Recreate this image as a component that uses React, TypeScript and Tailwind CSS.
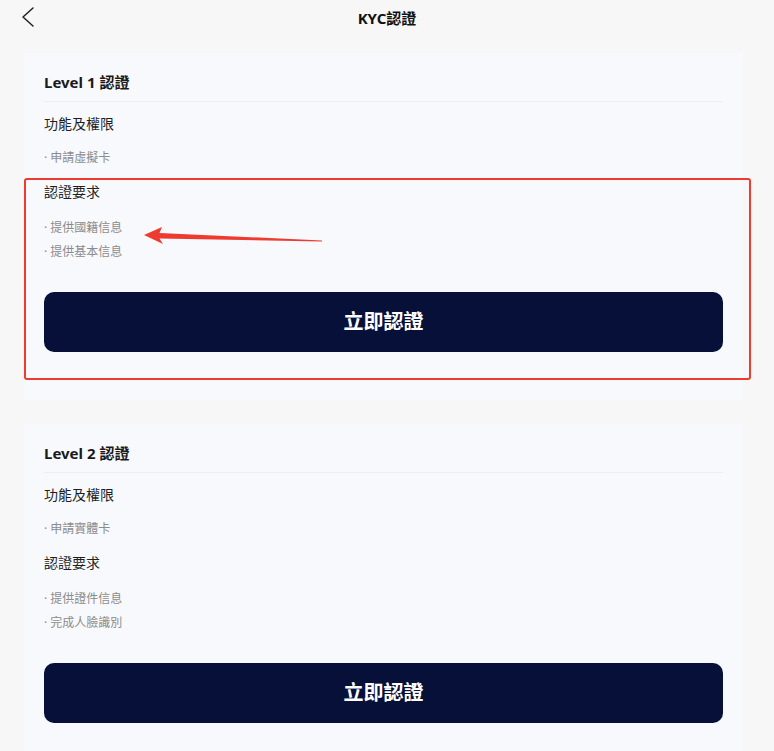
import React from "react";

const font = { fontFamily: '"Noto Sans", "Noto Sans CJK TC", sans-serif' };

function Card({ level, perm, reqs }: { level: string; perm: string; reqs: string[] }) {
  return (
    <div className="ml-6 w-[719px] bg-[#f8f9fc] px-5 pt-[17px] pb-12">
      <div className="text-[15px] leading-6 font-bold text-[#1a1a1a]">{level}</div>
      <div className="mt-[7px] h-px bg-[#eceef2]" />
      <div className="mt-3 text-[14px] leading-5 text-[#1f1f1f]">功能及權限</div>
      <div className="mt-4 text-[12px] leading-4 text-[#8c8c8c]">· {perm}</div>
      <div className="mt-4 text-[14px] leading-5 text-[#1f1f1f]">認證要求</div>
      <div className="mt-[18px] flex flex-col gap-2">
        {reqs.map((r) => (
          <div key={r} className="text-[12px] leading-4 text-[#8c8c8c]">· {r}</div>
        ))}
      </div>
      <button className="mt-8 flex h-[60px] w-full items-center justify-center rounded-[10px] bg-[#061038] text-[20px] font-bold text-white">
        立即認證
      </button>
    </div>
  );
}

export default function App() {
  return (
    <div className="relative min-h-[751px] w-[774px] overflow-hidden bg-[#f7f7f8]" style={font}>
      <div className="relative flex h-9 items-center justify-center">
        <svg className="absolute left-[20px] top-[6px]" width="16" height="22" viewBox="0 0 16 22">
          <path d="M13 2 L3 11 L13 20" fill="none" stroke="#222" strokeWidth="1.5" strokeLinecap="round" strokeLinejoin="round" />
        </svg>
        <div className="text-[15px] font-bold text-[#111]">KYC認證</div>
      </div>
      <div className="mt-[17px] flex flex-col gap-6">
        <Card level="Level 1 認證" perm="申請虛擬卡" reqs={["提供國籍信息", "提供基本信息"]} />
        <Card level="Level 2 認證" perm="申請實體卡" reqs={["提供證件信息", "完成人臉識別"]} />
      </div>
      <div className="pointer-events-none absolute left-[24px] top-[178px] h-[202px] w-[727px] rounded-[3px] border-2 border-[#ee3b30]" />
      <svg className="pointer-events-none absolute left-0 top-0" width="774" height="751">
        <polygon points="144,235 162,227 159.5,233 322,240.5 322,241.5 159.5,238.5 163,244" fill="#ee3b30" />
      </svg>
    </div>
  );
}
